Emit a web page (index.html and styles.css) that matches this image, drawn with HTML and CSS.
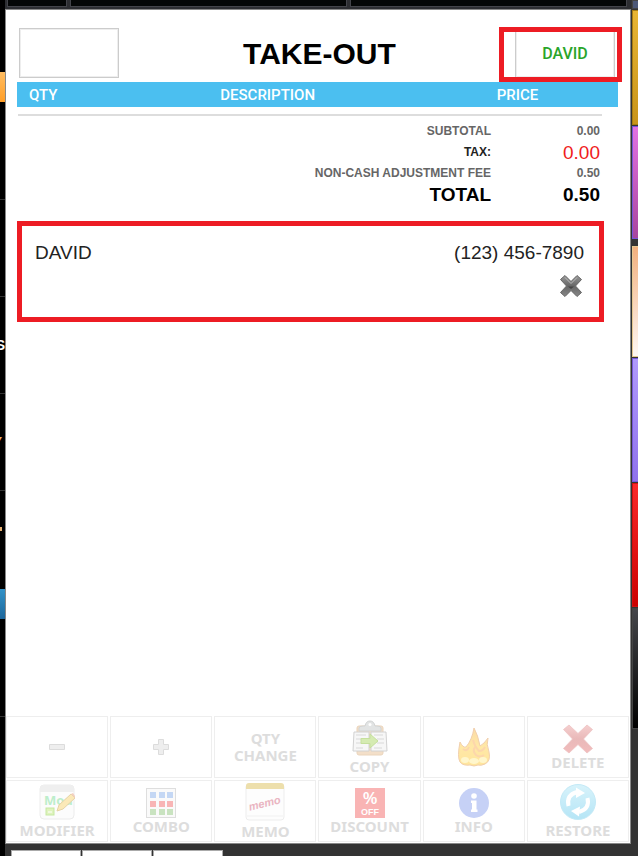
FILE: index.html
```
<!DOCTYPE html>
<html lang="en">

<head>
  <meta charset="UTF-8">
  <meta name="viewport" content="width=device-width, initial-scale=1.0">
  <title>Take-Out</title>
  <link rel="stylesheet" href="styles.css">
</head>

<body>
  <div class="screen">
    <aside class="rail-left">
      <div class="cat cat-top"><span class="cat-active"></span></div>
      <div class="cat"></div>
      <div class="cat cat-white">S</div>
      <div class="cat cat-orange">Y</div>
      <div class="cat cat-tall"><span class="cat-dot"></span><span class="cat-blue"></span></div>
      <div class="cat cat-last"></div>
    </aside>

    <div class="center">
      <div class="tabs">
        <div class="tab tab-small"></div>
        <div class="tab"></div>
        <div class="tab"></div>
      </div>

      <main class="ticket">
        <header class="header">
          <button class="box" type="button" aria-label="Table"></button>
          <h1 class="title">TAKE-OUT</h1>
          <div class="customer">
            <button class="box" type="button">DAVID</button>
          </div>
        </header>

        <div class="columns">
          <span>QTY</span>
          <span>DESCRIPTION</span>
          <span>PRICE</span>
        </div>

        <table class="totals">
          <tr>
            <th>SUBTOTAL</th>
            <td>0.00</td>
          </tr>
          <tr class="tax">
            <th>TAX:</th>
            <td>0.00</td>
          </tr>
          <tr>
            <th>NON-CASH ADJUSTMENT FEE</th>
            <td>0.50</td>
          </tr>
          <tr class="total">
            <th>TOTAL</th>
            <td>0.50</td>
          </tr>
        </table>

        <section class="contact">
          <div class="contact-row">
            <span>DAVID</span>
            <span>(123) 456-7890</span>
          </div>
          <button class="remove" type="button" aria-label="Remove customer">
            <svg width="24" height="24" viewBox="0 0 24 24">
              <defs>
                <linearGradient id="gray" x1="0" y1="0" x2="0" y2="1">
                  <stop offset="0" stop-color="#999" />
                  <stop offset=".5" stop-color="#666" />
                  <stop offset="1" stop-color="#888" />
                </linearGradient>
              </defs>
              <path d="M5 1.500L11 7.500 17 1.500 21.500 5.500 15.500 12 21.500 18.500 17 22.500 11 16.500 5 22.500 .500 18.500 6.500 12 .500 5.500Z" fill="url(#gray)" stroke="#666" stroke-linejoin="round" />
              <path d="M5 3.500L11 9.500 17 3.500" fill="none" stroke="#bbb" />
              <path d="M8 12.500H14L11 15Z" fill="#444" />
            </svg>
          </button>
        </section>

        <nav class="actions">
          <button class="action" type="button" aria-label="Decrease">
            <svg width="16" height="16" viewBox="0 0 16 16">
              <path d="M.500 5.500H15.500V10.500H.500Z" fill="#eee" stroke="#dcdcdc" />
            </svg>
          </button>
          <button class="action" type="button" aria-label="Increase">
            <svg width="16" height="16" viewBox="0 0 16 16">
              <path d="M5.500.500H10.500V5.500H15.500V10.500H10.500V15.500H5.500V10.500H.500V5.500H5.500Z" fill="#eee" stroke="#dcdcdc" />
            </svg>
          </button>
          <button class="action" type="button">QTY<br>CHANGE</button>
          <button class="action" type="button">
            <svg class="large" width="36" height="36" viewBox="0 0 36 36">
              <rect x="5" y="6" width="26" height="29" rx="2" fill="#f3dfc9" stroke="#ead4bb" />
              <path d="M7 11V8Q7 6 11 6H13Q14 1 18 1T23 6H25Q29 6 29 8V11Z" fill="#e2e4e4" stroke="#d2d4d4" />
              <circle cx="18" cy="4.500" r="1.500" fill="#fff" />
              <path d="M2 12H17V31H1Z" fill="#f7f7f7" stroke="#d2d2d2" />
              <path d="M19 12H34L35 31H19Z" fill="#f7f7f7" stroke="#d2d2d2" />
              <path d="M4 15H14M4 19H10M4 23H10M4 28H11M22 15H31M25 19H32M25 23H32M22 28H30" stroke="#d9d9d9" />
              <path d="M9 18.500H18V14L26 21 18 28V23.500H9Z" fill="#d5ebb2" stroke="#c6e09d" />
            </svg>
            COPY
          </button>
          <button class="action" type="button" aria-label="Fire">
            <svg width="32" height="40" viewBox="0 0 32 40">
              <defs>
                <linearGradient id="flame" x1="0" y1="0" x2="0" y2="1">
                  <stop offset="0" stop-color="#fbdba6" />
                  <stop offset=".5" stop-color="#ffe8a6" />
                  <stop offset="1" stop-color="#ffe59c" />
                </linearGradient>
              </defs>
              <path d="M16 1Q20 8 22 19Q26 17 30 11Q28 17 31 25Q33 34 27 37Q23 39 20 38Q16 40 12 38Q5 39 2 35Q-1 30 2 15Q5 21 8 20Q14 13 16 1Z" fill="url(#flame)" stroke="#f1cfad" />
              <path d="M15 13Q17 20 21 24Q25 24 27 20M5 22Q9 25 11 20M17 20Q14 24 18 28Q22 31 26 28" fill="none" stroke="#fcd6ac" stroke-width="2" />
              <ellipse cx="7" cy="33" rx="4" ry="3" fill="#fff6cc" />
              <ellipse cx="16" cy="34" rx="5" ry="3" fill="#fff6cc" />
              <ellipse cx="25" cy="33" rx="4" ry="3" fill="#fff6cc" />
            </svg>
          </button>
          <button class="action" type="button">
            <svg width="30" height="30" viewBox="0 0 30 30">
              <defs>
                <linearGradient id="cross" x1="0" y1="0" x2="0" y2="1">
                  <stop offset="0" stop-color="#f5cfcf" />
                  <stop offset=".5" stop-color="#e9b9b9" />
                  <stop offset="1" stop-color="#f2bcbc" />
                </linearGradient>
              </defs>
              <path d="M6 1L15 9.500 24 1 29.500 5.500 20.500 15 29.500 24.500 24 29 15 20.500 6 29 .500 24.500 9.500 15 .500 5.500Z" fill="url(#cross)" stroke="#edc3c3" stroke-width=".800" />
            </svg>
            DELETE
          </button>

          <button class="action" type="button">
            <svg class="large" width="36" height="36" viewBox="0 0 36 36">
              <rect x="1" y="1" width="34" height="34" rx="4" fill="#fcfcfc" stroke="#ececec" />
              <path d="M1 8V5Q1 1 5 1H31Q35 1 35 5V8Z" fill="#efefef" />
              <text class="mod-text" x="5" y="21">Mod</text>
              <rect x="7" y="24" width="8" height="7" fill="#dff3bd" stroke="#c5e8a2" />
              <path d="M9 28H13" stroke="#fff" />
              <path d="M18 27L20 21 32 10 36 14 24 25Z" fill="#fbe9b8" stroke="#e5d3a7" />
              <path d="M32 10L34 9 36 12 36 14Z" fill="#f3cfc0" />
            </svg>
            MODIFIER
          </button>
          <button class="action" type="button">
            <svg width="30" height="30" viewBox="0 0 30 30">
              <rect x=".500" y=".500" width="29" height="29" fill="#fafafa" stroke="#dedede" />
              <path d="M4 4h6v6h-6zM13 4h6v6h-6zM21 4h6v6h-6z" fill="#c4d7f4" />
              <path d="M4 13h6v6h-6zM13 13h6v6h-6zM21 13h6v6h-6z" fill="#f8b5b5" />
              <path d="M4 21h6v6h-6zM13 21h6v6h-6zM21 21h6v6h-6z" fill="#c9e3c0" />
            </svg>
            COMBO
          </button>
          <button class="action" type="button">
            <svg class="large" width="40" height="38" viewBox="0 0 40 38">
              <rect x="1" y="1" width="38" height="36" rx="3" fill="#fdfdfd" stroke="#ededed" />
              <path d="M1 6V3Q1 0 4 0H36Q39 0 39 3V6Z" fill="#eddfac" />
              <path d="M2 33H38" stroke="#f1f1f1" />
              <text class="memo-text" x="20" y="24" transform="rotate(-14 20 22)">memo</text>
            </svg>
            MEMO
          </button>
          <button class="action" type="button">
            <svg width="30" height="30" viewBox="0 0 30 30">
              <rect width="30" height="30" fill="#f9b4b4" />
              <text class="off-percent" x="15" y="16">%</text>
              <text class="off-text" x="15" y="27">OFF</text>
            </svg>
            DISCOUNT
          </button>
          <button class="action" type="button">
            <svg width="30" height="30" viewBox="0 0 30 30">
              <circle cx="15" cy="15" r="15" fill="#c6d1f6" />
              <circle cx="15" cy="8" r="2.800" fill="#fff" />
              <path d="M12 12.500H17.500V21.500H18.500V24H12V21.500H13V15H12Z" fill="#fff" />
            </svg>
            INFO
          </button>
          <button class="action" type="button">
            <svg class="large" width="36" height="36" viewBox="0 0 36 36">
              <defs>
                <linearGradient id="sky" x1="0" y1="0" x2="0" y2="1">
                  <stop offset="0" stop-color="#d8f3fb" />
                  <stop offset="1" stop-color="#b5e5f6" />
                </linearGradient>
              </defs>
              <circle cx="18" cy="18" r="17.500" fill="url(#sky)" stroke="#c3e9f6" />
              <path d="M8.500 22Q6 11 17 8" fill="none" stroke="#fff" stroke-width="4" />
              <path d="M16 3.500L25 9 16 14Z" fill="#fff" />
              <path d="M27.500 14Q30 25 19 28" fill="none" stroke="#fff" stroke-width="4" />
              <path d="M20 22.500L11 27 19 32.500Z" fill="#fff" />
            </svg>
            RESTORE
          </button>
        </nav>
      </main>

      <div class="bottom">
        <div class="bottom-tab"></div>
        <div class="bottom-tab"></div>
        <div class="bottom-tab"></div>
      </div>
    </div>

    <aside class="rail-right">
      <div class="item slate"></div>
      <div class="item gold"></div>
      <div class="item magenta"></div>
      <div class="item peach"></div>
      <div class="item purple"></div>
      <div class="item red"></div>
      <div class="item black"></div>
    </aside>
  </div>
</body>

</html>
```
FILE: styles.css
```
* {
  box-sizing: border-box;
}

body {
  margin: 0;
  background: #333;
  font-family: "Liberation Sans", Arial, sans-serif;
}

button {
  padding: 0;
  font: inherit;
}

.screen {
  display: flex;
  height: 100vh;
  overflow: hidden;
}

/* left categories */
.rail-left {
  display: flex;
  flex-direction: column;
  width: 5px;
  background: #000;
  overflow: hidden;
}

.cat {
  display: flex;
  flex-direction: column;
  align-items: flex-end;
  justify-content: center;
  height: 97px;
  flex-shrink: 0;
  border-bottom: 1px solid #333;
  font-size: 14px;
  font-weight: bold;
}

.cat-top {
  height: 200px;
  justify-content: flex-start;
  padding-top: 72px;
}

.cat-active {
  width: 5px;
  height: 30px;
  background: linear-gradient(#ffbd62, #ff9e27);
}

.cat-white {
  color: #fff;
}

.cat-orange {
  color: #e8b070;
  padding-right: 3px;
}

.cat-tall {
  height: 226px;
  justify-content: flex-start;
  padding-top: 36px;
}

.cat-dot {
  width: 2px;
  height: 4px;
  margin-right: 3px;
  background: #e8b070;
}

.cat-blue {
  width: 5px;
  height: 30px;
  margin-top: 58px;
  background: linear-gradient(#3292c8, #1c669b);
}

.cat-last {
  border: 0;
}

.center {
  display: flex;
  flex-direction: column;
  flex: 1;
}

.tabs {
  display: flex;
  gap: 3px;
  height: 9px;
  padding: 0 4px 2px 2px;
  background: #2d2e32;
}

.tab {
  flex: 1;
  background: #040606;
  border: 1px solid #43444a;
  border-top: 0;
}

.tab-small {
  flex: 0 0 60px;
}

/* ticket */
.ticket {
  display: flex;
  flex-direction: column;
  flex: 1;
  background: #fff;
  border: 1px solid #888;
}

.header {
  display: flex;
  align-items: center;
  justify-content: space-between;
  padding: 18px 15px 4px 13px;
}

.box {
  display: block;
  width: 100px;
  height: 50px;
  background: #fff;
  border: 1px solid #ccc;
  box-shadow: inset 0 0 0 1px #eee;
  color: #2aa52a;
  font-family: Roboto, sans-serif;
  font-size: 16px;
  font-weight: 500;
}

.title {
  margin: 0;
  padding: 2px 0 0 5px;
  font-size: 30px;
  line-height: 34px;
}

.customer {
  position: relative;
}

.customer::after {
  content: "";
  position: absolute;
  inset: -1px -7px -4px -16px;
  border: 5px solid #ed1c24;
  pointer-events: none;
}

.columns {
  display: grid;
  grid-template-columns: 1fr 2fr 1fr;
  align-items: center;
  height: 25px;
  margin: 0 12px 0 11px;
  padding: 0 12px;
  background: #4bbff0;
  color: #fff;
  font-family: Roboto, sans-serif;
  font-size: 15px;
  font-weight: 500;
}

.columns span:nth-child(2) {
  padding-left: 47px;
}

.columns span:nth-child(3) {
  padding-left: 35px;
}

.totals {
  margin: 7px 28px 0 12px;
  padding-top: 5px;
  border-top: 2px solid #ddd;
  border-spacing: 0;
  color: #666;
  font-size: 12px;
  font-weight: bold;
  line-height: 21px;
  text-align: right;
}

.totals th,
.totals td {
  height: 21px;
  padding: 0 2px 0 0;
}

.totals td {
  width: 109px;
}

.totals .tax {
  color: #222;
}

.totals .tax td {
  color: #f01c1c;
  font-size: 19px;
  font-weight: normal;
}

.totals .total {
  color: #000;
  font-size: 19px;
}

.contact {
  margin: 16px 26px 0 11px;
  height: 101px;
  padding: 16px 15px 0 13px;
  border: 5px solid #ed1c24;
  color: #222;
  font-size: 19px;
}

.contact-row {
  display: flex;
  justify-content: space-between;
  line-height: 22px;
}

.remove {
  display: block;
  margin: 10px 0 0 auto;
  border: 0;
  background: none;
}

.remove svg {
  display: block;
}

/* action buttons */
.actions {
  display: grid;
  grid-template-columns: repeat(6, 1fr);
  grid-auto-rows: 62px;
  gap: 2px;
  margin-top: auto;
  padding: 0 1px 1px 0;
}

.action {
  display: flex;
  flex-direction: column;
  align-items: center;
  justify-content: center;
  background: #fff;
  border: 1px solid #eee;
  color: #ddd;
  font-family: "Noto Sans", sans-serif;
  font-size: 15px;
  font-weight: bold;
  line-height: 17px;
}

.action svg {
  flex-shrink: 0;
}

.action .large {
  margin-bottom: 2px;
}

.mod-text {
  fill: #bdeecb;
  font-size: 13px;
}

.memo-text {
  fill: #eab5c2;
  font-family: "Liberation Sans", sans-serif;
  font-size: 11px;
  font-style: italic;
  text-anchor: middle;
}

.off-percent,
.off-text {
  fill: #fff;
  font-family: "Liberation Sans", sans-serif;
  font-size: 16px;
  text-anchor: middle;
}

.off-text {
  font-size: 9px;
}

.bottom {
  display: flex;
  gap: 1px;
  height: 12px;
  padding: 6px 0 0 6px;
  background: #333;
}

.bottom-tab {
  width: 70px;
  background: #fff;
  border: 1px solid #aaa;
  border-bottom: 0;
}

/* right menu items */
.rail-right {
  display: flex;
  flex-direction: column;
  width: 7px;
  padding-left: 1px;
  background: #333;
}

.item {
  flex: 0 0 124px;
  margin-bottom: 1px;
  border: 1px solid #444;
  border-right: 0;
}

.slate {
  flex-basis: 9px;
  background: #4c5878;
}

.gold {
  flex-basis: 115px;
  background: linear-gradient(#e8b534, #c8941a);
  border-color: #a87c10;
}

.magenta {
  flex-basis: 113px;
  margin-bottom: 7px;
  background: linear-gradient(#e272e2, #a8459e);
  border-color: #7454d8;
}

.peach {
  flex-basis: 111px;
  background: linear-gradient(#f2b07e, #fff8f4);
  border-color: #e6c890;
}

.purple {
  background: linear-gradient(#b09afc, #8f72ec);
  border-color: #7558d8;
}

.red {
  background: linear-gradient(#fa2a2a, #cc0000);
  border-color: #d01010;
}

.black {
  flex-basis: 121px;
  background: linear-gradient(#45464a, #000);
}
```
